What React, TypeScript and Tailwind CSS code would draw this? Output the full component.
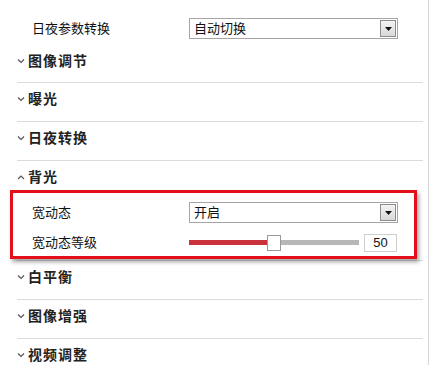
import type { ReactNode } from 'react'

const font = { fontFamily: '"Liberation Sans", "Noto Sans CJK SC", sans-serif' }

function Chevron({ up = false }: { up?: boolean }) {
  return (
    <svg width="8" height="6" viewBox="0 0 8 6" className="mr-[3px]">
      <polyline
        points={up ? '1,5 4,2 7,5' : '1,1.5 4,4.5 7,1.5'}
        fill="none"
        stroke="#555"
        strokeWidth="1.2"
      />
    </svg>
  )
}

function Select({ value }: { value: string }) {
  return (
    <div className="w-[209px] h-[21px] border border-[#a5a5a5] bg-white flex items-center justify-between pl-[4px] pr-[1px]">
      <span className="text-[13px] text-[#111]">{value}</span>
      <div className="w-[16px] h-[17px] border border-[#8c8c8c] bg-gradient-to-b from-[#f4f4f4] to-[#d8d8d8] flex items-center justify-center">
        <svg width="7" height="4" viewBox="0 0 7 4">
          <polygon points="0,0 7,0 3.5,4" fill="#111" />
        </svg>
      </div>
    </div>
  )
}

function Header({ title, up = false, h = 'h-[38px]' }: { title: string; up?: boolean; h?: string }) {
  return (
    <div className={`${h} pt-[6px] pl-[17px] flex items-start`}>
      <div className="h-[20px] flex items-center">
        <Chevron up={up} />
        <span className="text-[14px] font-bold text-[#222] tracking-[1px]">{title}</span>
      </div>
    </div>
  )
}

function Divider() {
  return <div className="ml-[17px] mr-[5px] h-px bg-[#dcdcdc]" />
}

function Row({ label, children, className = '' }: { label: string; children: ReactNode; className?: string }) {
  return (
    <div className={`flex items-center ${className}`}>
      <span className="w-[176px] pl-[19px] text-[13px] text-[#111]">{label}</span>
      {children}
    </div>
  )
}

export default function App() {
  const level = 50
  return (
    <div className="w-[430px] h-[365px] bg-white overflow-hidden" style={font}>
      <div className="w-[429px] h-[370px] border-r border-[#d6d6d6]">
        <div className="flex items-center pt-[18px]">
          <span className="w-[189px] pl-[32px] text-[13px] text-[#111]">日夜参数转换</span>
          <Select value="自动切换" />
        </div>
        <Header title="图像调节" h="h-[43px] pt-[12px]" />
        <Divider />
        <Header title="曝光" />
        <Divider />
        <Header title="日夜转换" />
        <Divider />
        <Header title="背光" up h="h-[29px]" />
        <div className="relative ml-[10px] w-[407px] h-[69px] border-[3px] border-[#e3101b] shadow-[2px_3px_4px_rgba(0,0,0,0.35)] pt-[9px]">
          <Row label="宽动态">
            <Select value="开启" />
          </Row>
          <Row label="宽动态等级" className="mt-[10px]">
            <div className="relative w-[170px] h-[16px] flex items-center">
              <div className="h-[5px] bg-[#c9313b]" style={{ width: `${(level / 100) * 158}px` }} />
              <div className="h-[5px] flex-1 bg-[#b8b8b8]" />
              <div
                className="absolute top-0 w-[14px] h-[16px] bg-white border border-[#999]"
                style={{ left: `${(level / 100) * 158 - 1}px` }}
              />
            </div>
            <div className="ml-[5px] w-[33px] h-[18px] border border-[#cfcfcf] flex items-center justify-center text-[13px] text-[#111]">
              {level}
            </div>
          </Row>
        </div>
        <div className="mt-[1px]">
          <Divider />
        </div>
        <Header title="白平衡" />
        <Divider />
        <Header title="图像增强" />
        <Divider />
        <Header title="视频调整" />
      </div>
    </div>
  )
}
